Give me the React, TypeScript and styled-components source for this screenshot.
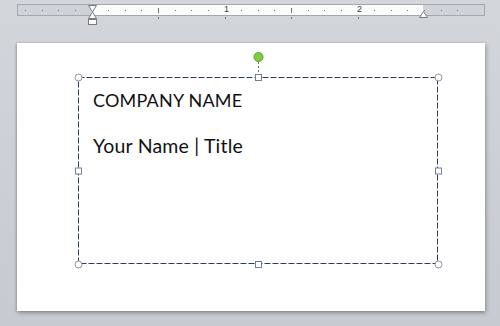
import styled, { createGlobalStyle } from "styled-components";

const GlobalStyle = createGlobalStyle`
	html, body {
		margin: 0;
		padding: 0;
	}
	body {
		width: 500px;
		height: 326px;
		overflow: hidden;
		background: linear-gradient(#d3d6db, #c6cad1);
		font-family: Lato, "Liberation Sans", sans-serif;
	}
`;

const Workspace = styled.div`
	display: flex;
	flex-direction: column;
	padding: 4px 15px 0 17px;
`;

const Ruler = styled.div`
	position: relative;
	display: flex;
	border: 1px solid #a2a7ae;
	box-sizing: border-box;
	height: 12px;
`;

const RulerSegment = styled.div<{ $w?: number; $light?: boolean }>`
	flex: ${(p) => (p.$w ? `0 0 ${p.$w}px` : "1")};
	background: ${(p) => (p.$light ? "#fbfbfc" : "#cfd2d7")};
`;

const RulerMarks = styled.svg`
	position: absolute;
	left: -1px;
	top: -5px;
	overflow: visible;
`;

const RulerNumber = styled.span<{ $x: number }>`
	position: absolute;
	top: -1px;
	left: ${(p) => p.$x}px;
	font-family: "Liberation Sans", sans-serif;
	font-size: 9px;
	line-height: 10px;
	color: #3c3e42;
`;

const Page = styled.div`
	margin-top: 27px;
	width: 468px;
	height: 268px;
	background: #ffffff;
	box-shadow: 1px 2px 4px rgba(60, 66, 76, 0.45), -1px 0 2px rgba(60, 66, 76, 0.25);
	padding: 34px 0 0 61px;
	box-sizing: border-box;
`;

const TextBox = styled.div`
	position: relative;
	width: 361px;
	height: 188px;
	box-sizing: border-box;
	padding: 11px 15px;
	display: flex;
	flex-direction: column;
	gap: 22px;
`;

const Frame = styled.svg`
	position: absolute;
	inset: 0;
	overflow: visible;
	pointer-events: none;
`;

const Line = styled.div<{ $size: number }>`
	font-size: ${(p) => p.$size}px;
	line-height: 24px;
	letter-spacing: 0.2px;
	color: #111;
	white-space: nowrap;
`;

const ticks = [25, 42, 58, 75, 108, 125, 141, 158, 175, 191, 208, 241, 258, 274, 291, 308, 324, 341, 374, 391, 407, 424, 441, 457];
const tabs = [158, 225, 291, 358];

const App = () => {
	const w = 361;
	const h = 188;
	const corners = [
		[0, 0],
		[w - 1, 0],
		[0, h - 1],
		[w - 1, h - 1],
	];
	const mids = [
		[(w - 1) / 2, 0],
		[0, (h - 1) / 2],
		[w - 1, (h - 1) / 2],
		[(w - 1) / 2, h - 1],
	];

	return (
		<>
			<GlobalStyle />
			<Workspace>
				<Ruler>
					<RulerSegment $w={73} />
					<RulerSegment $w={332} $light />
					<RulerSegment />
					<RulerMarks width="468" height="24">
						{ticks.map((x) => {
							const rx = x - 17;
							const big = x === 158 || x === 291;
							return (
								<line
									key={x}
									x1={rx + 0.5}
									x2={rx + 0.5}
									y1={big ? 8 : 10}
									y2={big ? 13 : 11}
									stroke="#6f737a"
									strokeWidth="1"
								/>
							);
						})}
						{tabs.map((x) => (
							<line key={"t" + x} x1={x - 17 + 0.5} x2={x - 17 + 0.5} y1="17" y2="19" stroke="#6f737a" />
						))}
						<path
							d="M71.5 5.5 h8 l-4 6.5 l4 6.5 h-8 l4 -6.5 z"
							fill="#fdfdfd"
							stroke="#777b82"
						/>
						<rect x="71.5" y="19.5" width="8" height="5" fill="#fdfdfd" stroke="#777b82" />
						<path d="M402.5 17.5 l4 -6 l4 6 z" fill="#fdfdfd" stroke="#777b82" />
					</RulerMarks>
					<RulerNumber $x={206}>1</RulerNumber>
					<RulerNumber $x={339}>2</RulerNumber>
				</Ruler>
				<Page>
					<TextBox>
						<Frame width={w} height={h}>
							<rect
								x="0.5"
								y="0.5"
								width={w - 2}
								height={h - 2}
								fill="none"
								stroke="#2b3c55"
								strokeDasharray="6 2"
							/>
							<line x1={(w - 1) / 2 + 0.5} x2={(w - 1) / 2 + 0.5} y1="-15" y2="-3" stroke="#5b8a3a" strokeDasharray="2 2" />
							<circle cx={(w - 1) / 2 + 0.5} cy="-20" r="4.5" fill="#7ccf3c" stroke="#5e9c2e" />
							{corners.map(([cx, cy], i) => (
								<circle key={i} cx={cx + 0.5} cy={cy + 0.5} r="3.5" fill="#fff" stroke="#8e9196" />
							))}
							{mids.map(([cx, cy], i) => (
								<rect key={i} x={cx - 2.5} y={cy - 2.5} width="6" height="6" fill="#fff" stroke="#6f7f95" />
							))}
						</Frame>
						<Line $size={18}>COMPANY NAME</Line>
						<Line $size={19.5}>Your Name | Title</Line>
					</TextBox>
				</Page>
			</Workspace>
		</>
	);
};

export default App;
